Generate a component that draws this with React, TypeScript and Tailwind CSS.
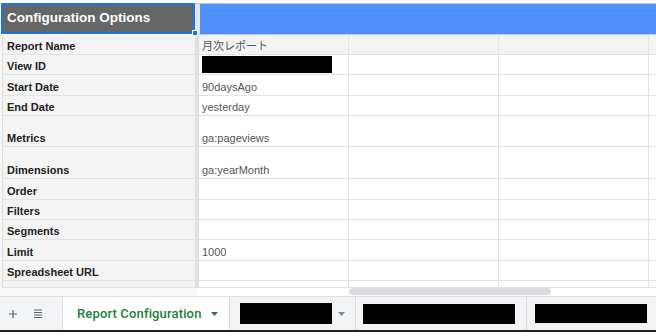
import type { JSX } from "react";

type Row = { label: string; value?: string; h: string; redact?: boolean; shaded?: boolean };

// row heights include the 1px bottom grid line
const rows: Row[] = [
    { label: "Report Name", value: "月次レポート", h: "h-[20px]", shaded: true },
    { label: "View ID", h: "h-[20px]", redact: true },
    { label: "Start Date", value: "90daysAgo", h: "h-[21px]" },
    { label: "End Date", value: "yesterday", h: "h-[20px]" },
    { label: "Metrics", value: "ga:pageviews", h: "h-[31px]" },
    { label: "Dimensions", value: "ga:yearMonth", h: "h-[32px]" },
    { label: "Order", h: "h-[21px]" },
    { label: "Filters", h: "h-[20px]" },
    { label: "Segments", h: "h-[20px]" },
    { label: "Limit", value: "1000", h: "h-[21px]" },
    { label: "Spreadsheet URL", h: "h-[20px]" },
];

// small caret used on sheet tabs
function Caret({ color }: { color: string }): JSX.Element {
    return (
        <svg width="7" height="4" viewBox="0 0 7 4">
            <path d="M0 0 L7 0 L3.5 4 Z" fill={color} />
        </svg>
    );
}

function GridRow({ row }: { row: Row }): JSX.Element {
    const bg = row.shaded ? "bg-[#f3f3f3]" : "bg-white";
    return (
        <div className={`flex ${row.h}`}>
            <div className="w-[3px] shrink-0 bg-[#f6f6f6] border-r border-[#dcdcdc]" />
            <div className="w-[192px] shrink-0 flex items-end pb-[1px] px-[4px] bg-[#f3f3f3] border-b border-[#e2e2e2] font-bold text-[11px] leading-[14px] text-[#222]">
                {row.label}
            </div>
            <div className="w-[4px] shrink-0 bg-[#e0e0e0]" />
            <div className={`w-[150px] shrink-0 flex items-end pb-[1px] px-[3px] ${bg} border-b border-r border-[#e2e2e2] text-[11px] leading-[14px] text-[#555]`}>
                {row.redact ? <div className="w-[130px] h-[17px] bg-black" /> : row.value}
            </div>
            <div className={`w-[150px] shrink-0 ${bg} border-b border-r border-[#e2e2e2]`} />
            <div className={`w-[150px] shrink-0 ${bg} border-b border-r border-[#e2e2e2]`} />
            <div className={`flex-1 ${bg} border-b border-[#e2e2e2]`} />
        </div>
    );
}

function App(): JSX.Element {
    return (
        <div className="w-[656px] h-[336px] overflow-hidden bg-white flex flex-col font-['Liberation_Sans','Noto_Sans_CJK_JP',sans-serif]">
            <div className="h-[3px] shrink-0" />

            {/* header row */}
            <div className="h-[32px] shrink-0 flex relative">
                <div className="ml-[1px] w-[194px] h-[31px] shrink-0 bg-[#666666] border-2 border-[#1a73e8] flex items-center pl-[4px] pb-[1px] text-white font-bold text-[13.5px]">
                    Configuration Options
                </div>
                <div className="w-[5px] shrink-0 bg-[#e6e6e6] border-t border-[#c6c6c6]" />
                <div className="flex-1 bg-[#4d90fe] border-t border-b border-[#c6c6c6]" />
                <div className="absolute left-[192px] top-[27px] w-[6px] h-[6px] bg-[#1a73e8] border border-white" />
            </div>

            {rows.map((row) => (
                <GridRow key={row.label} row={row} />
            ))}

            {/* partially visible row */}
            <div className="flex h-[7px] shrink-0">
                <div className="w-[3px] shrink-0 bg-[#f6f6f6] border-r border-[#dcdcdc]" />
                <div className="w-[192px] shrink-0 bg-[#f3f3f3] border-b border-[#e2e2e2]" />
                <div className="w-[4px] shrink-0 bg-[#e0e0e0]" />
                <div className="w-[150px] shrink-0 border-b border-r border-[#e2e2e2]" />
                <div className="w-[150px] shrink-0 border-b border-r border-[#e2e2e2]" />
                <div className="w-[150px] shrink-0 border-b border-r border-[#e2e2e2]" />
                <div className="flex-1 border-b border-[#e2e2e2]" />
            </div>

            {/* horizontal scroll strip */}
            <div className="h-[9px] shrink-0 flex border-b border-[#e0e0e0]">
                <div className="w-[198px] shrink-0 bg-[#f8f8f8]" />
                <div className="flex-1 pl-[151px]">
                    <div className="w-[202px] h-[7px] rounded-full bg-[#dadce0]" />
                </div>
            </div>

            {/* sheet tabs */}
            <div className="h-[33px] shrink-0 flex bg-[#f1f3f4] font-['Roboto',sans-serif]">
                <div className="w-[63px] shrink-0 flex items-center border-r border-[#dadce0]">
                    <svg className="ml-[9px]" width="8" height="8" viewBox="0 0 8 8">
                        <path d="M4 0 V8 M0 4 H8" stroke="#5f6368" strokeWidth="1.2" />
                    </svg>
                    <svg className="ml-[17px]" width="8" height="9" viewBox="0 0 8 9">
                        <path d="M0 1 H8 M0 3.5 H8 M0 6 H8 M0 8.5 H8" stroke="#5f6368" strokeWidth="1.1" />
                    </svg>
                </div>
                <div className="w-[166px] shrink-0 bg-white flex items-center pl-[14px] gap-[9px] text-[13px] tracking-[0.15px] font-medium text-[#188038]">
                    <span>Report Configuration</span>
                    <Caret color="#188038" />
                </div>
                <div className="w-[127px] shrink-0 flex items-center pl-[10px] border-l border-r border-[#dadce0]">
                    <div className="w-[92px] h-[21px] bg-black" />
                    <span className="ml-[6px]">
                        <Caret color="#80868b" />
                    </span>
                </div>
                <div className="w-[171px] shrink-0 flex items-center pl-[7px] border-r border-[#dadce0]">
                    <div className="w-[152px] h-[20px] bg-black" />
                </div>
                <div className="flex-1 flex items-center pl-[8px]">
                    <div className="w-[112px] h-[19px] bg-black" />
                </div>
            </div>
            <div className="h-[2px] shrink-0 bg-[#202124]" />
            <div className="flex-1 bg-white" />
        </div>
    );
}

export default App;
